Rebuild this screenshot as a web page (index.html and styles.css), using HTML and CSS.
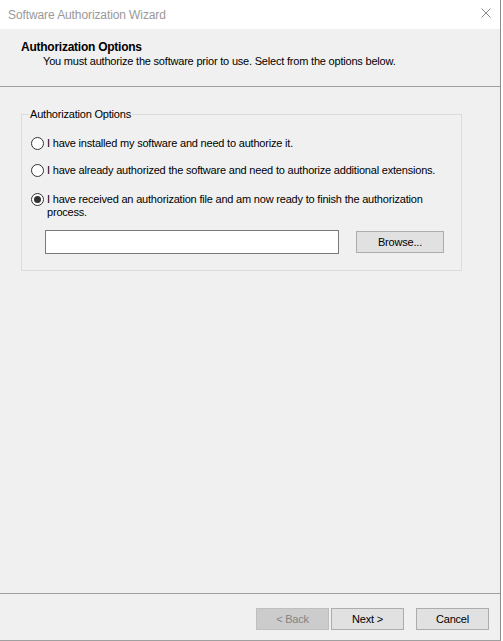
FILE: index.html
```html
<!DOCTYPE html>
<html>
<head>
<meta charset="utf-8">
<link rel="stylesheet" href="styles.css">
<title>Software Authorization Wizard</title>
</head>
<body>
<div class="window">
  <div class="titlebar">
    <span class="title">Software Authorization Wizard</span>
    <svg class="close" width="10" height="10" viewBox="0 0 10 10"><path d="M0.5 0.5 L9.5 9.5 M9.5 0.5 L0.5 9.5" stroke="#8a8a8a" stroke-width="1" fill="none"/></svg>
  </div>
  <div class="header">
    <div class="h-title">Authorization Options</div>
    <div class="h-sub">You must authorize the software prior to use. Select from the options below.</div>
  </div>
  <div class="content">
    <fieldset class="group">
      <legend>Authorization Options</legend>
      <div class="opt opt1"><span class="radio"></span><span class="label">I have installed my software and need to authorize it.</span></div>
      <div class="opt opt2"><span class="radio"></span><span class="label">I have already authorized the software and need to authorize additional extensions.</span></div>
      <div class="opt opt3"><span class="radio checked"></span><span class="label">I have received an authorization file and am now ready to finish the authorization process.</span></div>
      <div class="filerow">
        <div class="textbox"></div>
        <div class="btn browse">Browse...</div>
      </div>
    </fieldset>
  </div>
  <div class="footer">
    <div class="btn disabled">&lt; Back</div>
    <div class="btn next">Next &gt;</div>
    <div class="btn cancel">Cancel</div>
  </div>
</div>
</body>
</html>
```
FILE: styles.css
```css
html, body {
  margin: 0;
  padding: 0;
  background: #ffffff;
}
body {
  font-family: "Liberation Sans", Arial, sans-serif;
  font-size: 11px;
  letter-spacing: -0.2px;
  color: #000;
}
.window {
  width: 500px;
  height: 640px;
  border-right: 1px solid #8c8c8c;
  border-bottom: 1px solid #a0a0a0;
  background: #f0f0f0;
  display: flex;
  flex-direction: column;
}
.titlebar {
  height: 29px;
  flex: none;
  background: #ffffff;
  display: flex;
  align-items: center;
  justify-content: space-between;
  padding: 0 9px 0 8px;
}
.title {
  font-size: 12px;
  letter-spacing: -0.1px;
  color: #999999;
}
.close {
  display: block;
  margin-top: -4px;
}
.header {
  height: 58px;
  flex: none;
  box-sizing: border-box;
  border-bottom: 1px solid #a0a0a0;
  padding: 12px 0 0 21px;
}
.h-title {
  font-weight: bold;
  font-size: 12px;
  letter-spacing: -0.25px;
  line-height: 13px;
}
.h-sub {
  padding-left: 22px;
  line-height: 13px;
  margin-top: 1px;
}
.content {
  flex: 1;
  padding: 21px 0 0 21px;
  border-bottom: 1px solid #a0a0a0;
}
.group {
  margin: 0;
  width: 441px;
  box-sizing: border-box;
  border: 1px solid #dcdcdc;
  padding: 16px 0 16px 9px;
}
.group legend {
  padding: 0 1px;
  margin-left: -2px;
  line-height: 13px;
}
.opt {
  display: flex;
  align-items: flex-start;
  gap: 3px;
}
.opt2 { margin-top: 14px; }
.opt3 { margin-top: 16px; }
.label {
  line-height: 13px;
  width: 400px;
}
.radio {
  flex: none;
  width: 13px;
  height: 13px;
  box-sizing: border-box;
  border: 1px solid #333333;
  border-radius: 50%;
  background: #ffffff;
  display: flex;
  align-items: center;
  justify-content: center;
}
.radio.checked::after {
  content: "";
  width: 7px;
  height: 7px;
  border-radius: 50%;
  background: #333333;
}
.filerow {
  display: flex;
  align-items: flex-start;
  margin-top: 11px;
  padding-left: 14px;
}
.textbox {
  width: 294px;
  height: 24px;
  box-sizing: border-box;
  border: 1px solid #7a7a7a;
  background: #ffffff;
}
.btn {
  box-sizing: border-box;
  height: 22px;
  border: 1px solid #adadad;
  background: #e1e1e1;
  display: flex;
  align-items: center;
  justify-content: center;
  line-height: 13px;
}
.browse {
  width: 88px;
  margin-left: 17px;
  margin-top: 1px;
}
.footer {
  height: 46px;
  flex: none;
  display: flex;
  justify-content: flex-end;
  align-items: flex-start;
  padding: 14px 11px 0 0;
  box-sizing: border-box;
}
.footer .btn {
  width: 73px;
}
.btn.disabled {
  background: #cccccc;
  border-color: #bfbfbf;
  color: #838383;
}
.btn.next {
  margin-left: 2px;
}
.btn.cancel {
  margin-left: 12px;
}
```
